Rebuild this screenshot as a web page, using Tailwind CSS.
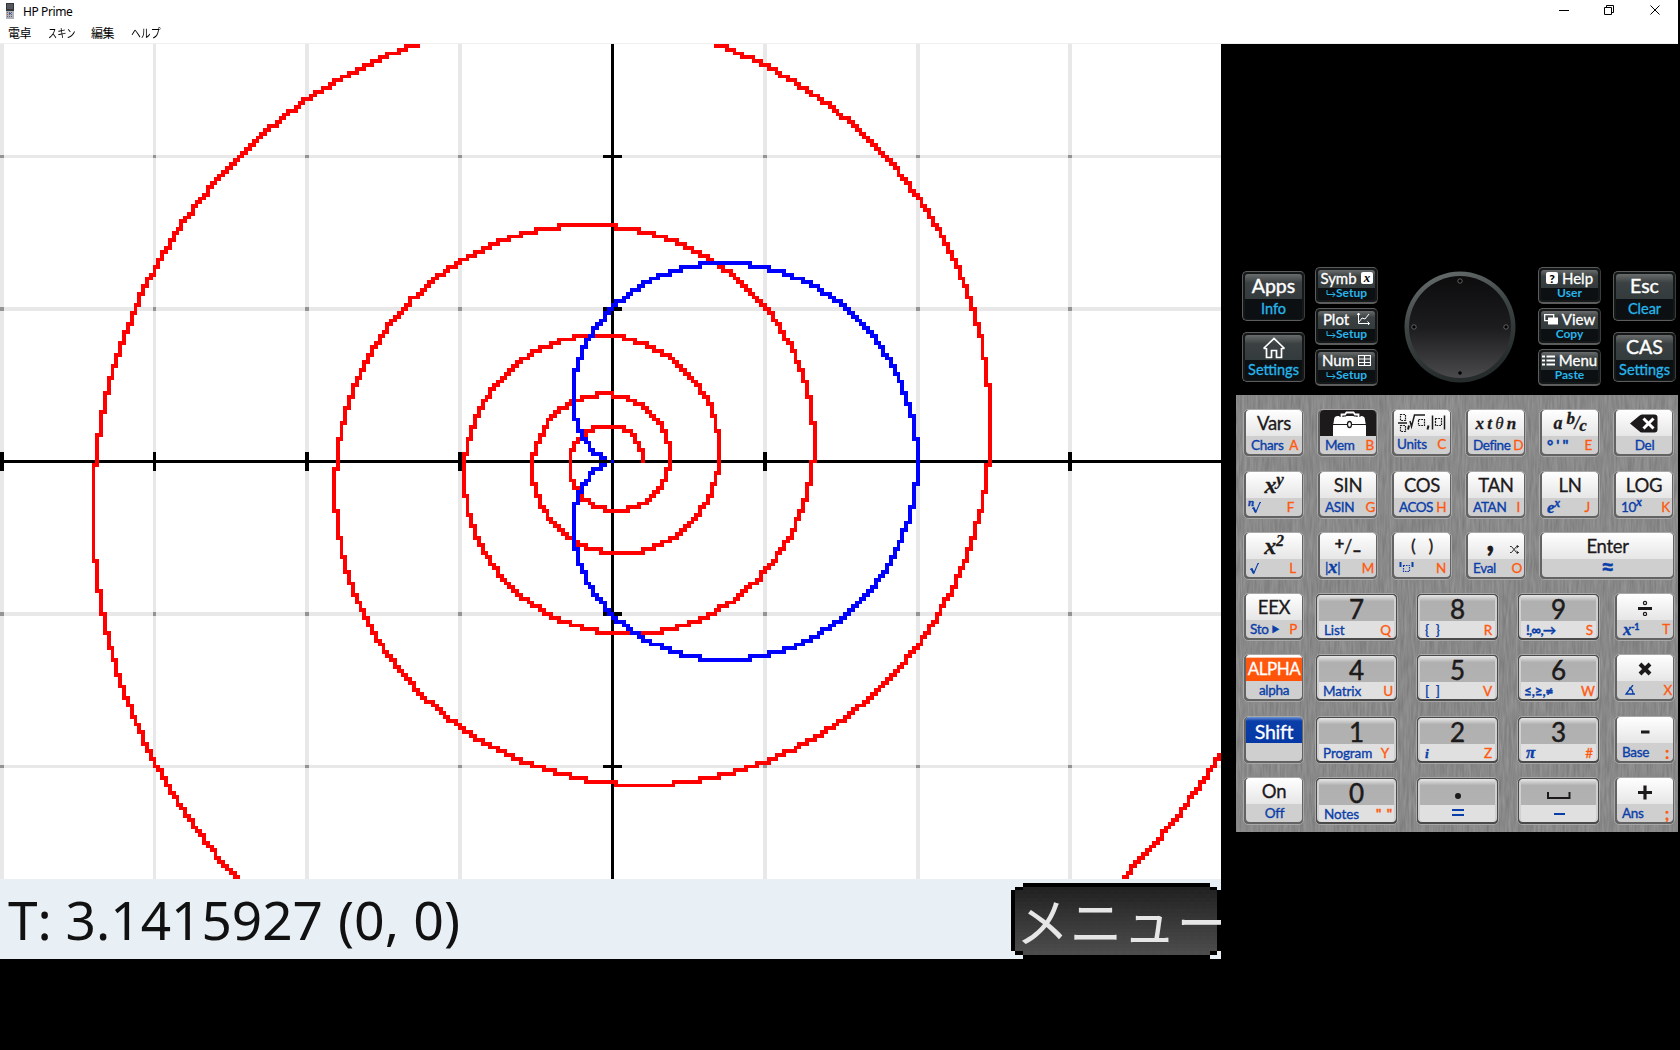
<!DOCTYPE html>
<html lang="ja">
<head>
    <meta charset="UTF-8">
    <meta name="viewport" content="width=device-width, initial-scale=1.0">
    <title>HP Prime</title>
    <script src="https://cdn.jsdelivr.net/npm/@tailwindcss/browser@4"></script>
</head>
<body class="bg-black w-[1680px] h-[1050px] overflow-hidden font-['Lato','Noto_Sans_CJK_JP',sans-serif]">

    <!-- Title bar + menu -->
    <header class="w-[1678px] h-[44px] bg-white border-b border-[#f0f0f0] font-['Noto_Sans','Noto_Sans_CJK_JP',sans-serif] text-black">
        <div class="flex items-center h-[22px]">
            <svg class="ml-[6px] -mt-[1px]" width="8" height="16" viewBox="0 0 8 16">
                <rect width="8" height="16" fill="#aeb2b8"/>
                <rect width="8" height="8" fill="#34363a"/>
                <rect x="1" y="1" width="6" height="5" fill="#55585c"/>
                <path d="M1 9.500h6M1 11.500h6M1 13.500h6" stroke="#63676d" stroke-dasharray="1 1"/>
                <path d="M1 11.500h1" stroke="#e0402a"/><path d="M3 10.500h2" stroke="#2b56c0"/>
            </svg>
            <span class="ml-[9px] mt-[1px] text-[12px] leading-[22px] tracking-[-0.4px]">HP Prime</span>
            <svg class="ml-auto mr-[17px] -mt-[2px]" width="102" height="12" viewBox="0 0 102 12" fill="none" stroke="#000">
                <path d="M0 6.5h10"/>
                <path d="M45.5 3.500h7v7h-7zM47.500 3.500v-2h7v7h-2"/>
                <path d="M91.500 1.500l9 9M100.500 1.500l-9 9"/>
            </svg>
        </div>
        <nav class="flex h-[21px] pt-[1px] pl-[8px] text-[12px] leading-[21px]">
            <span class="w-[40px] tracking-[-0.5px]">電卓</span>
            <span class="w-[43px]"><span class="inline-block origin-left scale-x-[0.77]">スキン</span></span>
            <span class="w-[40px] tracking-[-0.5px]">編集</span>
            <span><span class="inline-block origin-left scale-x-[0.82]">ヘルプ</span></span>
        </nav>
    </header>

    <main class="flex">
        <!-- Calculator screen -->
        <section class="relative w-[1221px] h-[915px] overflow-hidden bg-white">
            <canvas id="screen" width="320" height="240" class="block w-[1221px] h-[915px] [image-rendering:pixelated]"></canvas>
            <div class="absolute left-[8px] bottom-0 h-[80px] w-[460px]">
                <svg width="460" height="80" class="font-['Noto_Sans',sans-serif]">
                    <text x="0" y="61" font-size="53" textLength="315" lengthAdjust="spacingAndGlyphs" fill="#111">T: 3.1415927</text>
                    <text x="330" y="61" font-size="53" textLength="122" lengthAdjust="spacingAndGlyphs" fill="#111">(0, 0)</text>
                </svg>
            </div>
            <div class="absolute left-[1016px] bottom-0 h-[76px] w-[205px] overflow-hidden whitespace-nowrap text-[#e6e6e6] text-[53px] leading-[74px] tracking-[0.5px] font-['Noto_Sans_CJK_JP',sans-serif] font-normal">メニュー</div>
        </section>

        <!-- Keyboard -->
        <section class="ml-[15px] w-[442px]">
            <div class="flex h-[351px] pt-[227px] pl-[6px]">
                <div id="navA" class="flex flex-col gap-[11px]"></div>
                <div id="navB" class="flex flex-col gap-[4px] -mt-[4px] ml-[10px]"></div>
                <svg class="ml-[26px] shrink-0" width="112" height="112" viewBox="0 0 112 112">
                    <defs>
                        <linearGradient id="rim" x1="0" y1="0" x2="0.3" y2="1">
                            <stop offset="0" stop-color="#6d7272"/><stop offset="0.5" stop-color="#3d4444"/><stop offset="1" stop-color="#262b2b"/>
                        </linearGradient>
                        <linearGradient id="face" x1="0" y1="0" x2="0" y2="1">
                            <stop offset="0" stop-color="#0c0c0d"/><stop offset="0.5" stop-color="#1c1c1e"/><stop offset="1" stop-color="#4a4a4c"/>
                        </linearGradient>
                    </defs>
                    <circle cx="56" cy="56" r="55.500" fill="url(#rim)"/>
                    <circle cx="56" cy="56" r="51" fill="url(#face)"/>
                    <g fill="#000" stroke="#777" stroke-width="0.8">
                        <circle cx="56" cy="10" r="2.200"/><circle cx="10" cy="56" r="2.200"/><circle cx="102" cy="56" r="2.200"/><circle cx="56" cy="102" r="1.800" stroke="none"/>
                    </g>
                </svg>
                <div id="navC" class="flex flex-col gap-[4px] -mt-[4px] ml-[22px]"></div>
                <div id="navD" class="flex flex-col gap-[11px] ml-[12px]"></div>
            </div>

            <div class="relative w-[442px] h-[437px] bg-[#8a8a8a] overflow-hidden">
                <svg class="absolute inset-0" width="442" height="437">
                    <filter id="brushed" x="0" y="0" width="100%" height="100%" color-interpolation-filters="sRGB">
                        <feTurbulence type="fractalNoise" baseFrequency="0.45 0.05" numOctaves="2" seed="4"/>
                        <feColorMatrix values="0.15 0 0 0 0.46  0.15 0 0 0 0.46  0.15 0 0 0 0.46  0 0 0 0 1"/>
                    </filter>
                    <rect width="442" height="437" filter="url(#brushed)"/>
                </svg>
                <div id="keys" class="relative pt-[14px] pl-[7px] flex flex-col"></div>
            </div>
        </section>
    </main>

    <script>
        // ---- keyboard ----
        const math = (s) => `<i class="font-['Liberation_Serif',serif] font-bold">${s}</i>`;

        const navBig = (top, bottom) => `
            <div class="w-[63px] h-[50px] rounded-[5px] border border-[#5c5c5c] border-r-[#3c3c3c] bg-[#151818] p-[2px] text-center">
                <div class="h-[25px] rounded-t-[3px] bg-linear-to-b from-[#6a6c6c] from-0% via-[#3b4142] via-35% to-[#343b3c] text-white text-[19.500px] leading-[23px] flex justify-center [-webkit-text-stroke:0.400px_#fff]">${top}</div>
                <div class="h-[20px] rounded-b-[3px] bg-[#0c1012] text-[#27b5ec] text-[14.500px] leading-[20px] [-webkit-text-stroke:0.300px_#27b5ec]">${bottom}</div>
            </div>`;

        const navSmall = (top, bottom) => `
            <div class="w-[63px] h-[37px] rounded-[5px] border border-[#5c5c5c] border-b-2 border-r-[#3c3c3c] bg-[#151818] p-[2px] text-center">
                <div class="h-[18px] rounded-t-[3px] bg-linear-to-b from-[#6a6c6c] from-0% via-[#3b4142] via-35% to-[#343b3c] text-white text-[15px] leading-[15px] flex justify-center items-center gap-[4px] [-webkit-text-stroke:0.300px_#fff] pb-[2px]">${top}</div>
                <div class="h-[12px] rounded-b-[3px] bg-[#0c1012] text-[#27b5ec] text-[12px] leading-[10px] font-bold">${bottom}</div>
            </div>`;

        const arrow = `<svg class="inline-block" width="10" height="8" viewBox="0 0 10 8" fill="none" stroke="#27b5ec"><path d="M1 0v4.500h8M6.500 2l2.500 2.500l-2.500 2.500"/></svg>`;
        const house = `<svg class="mt-[2px]" width="24" height="22" viewBox="0 0 24 22" fill="none" stroke="#fff" stroke-width="1.700"><path d="M4.500 11v9.500h5v-7h5v7h5v-9.500M1.500 11.500h3M19.500 11.500h3M1.500 11.500L12 1.500l10.500 10"/></svg>`;
        const boxX = `<svg width="12" height="12" viewBox="0 0 12 12"><rect width="12" height="12" rx="2" fill="#fff"/><text x="6" y="10" text-anchor="middle" font-size="13" font-weight="bold" font-style="italic" font-family="Liberation Serif" style="-webkit-text-stroke:0">x</text></svg>`;
        const chart = `<svg class="ml-[4px]" width="13" height="12" viewBox="0 0 13 12" fill="none" stroke="#fff"><path d="M1.500 0v10.500h11M10.500 8.500l2 2l-2 2M0 2l1.500-2l1.500 2M2 9l3-4l3 1l4-5"/></svg>`;
        const table = `<svg width="13" height="11" viewBox="0 0 13 11" fill="none" stroke="#fff"><path d="M.5.5h12v10h-12zM.5 4h12M.5 7.500h12M6.500.5v10" stroke-width="1.200"/></svg>`;
        const question = `<svg width="12" height="12" viewBox="0 0 12 12"><rect width="12" height="12" rx="2" fill="#fff"/><text x="6" y="10.500" text-anchor="middle" font-size="12" font-weight="900" font-family="Lato" style="-webkit-text-stroke:0">?</text></svg>`;
        const windows = `<svg width="14" height="11" viewBox="0 0 14 11"><path d="M.7.7h9v6h-9z" fill="none" stroke="#fff" stroke-width="1.300"/><rect x="4" y="3.500" width="10" height="7" fill="#fff"/></svg>`;
        const list = `<svg width="13" height="11" viewBox="0 0 13 11" stroke="#fff" stroke-width="2.200"><path d="M0 1.500h3M0 5.500h3M0 9.500h3M4.500 1.500h8.500M4.500 5.500h8.500M4.500 9.500h8.500"/></svg>`;

        document.getElementById('navA').innerHTML = navBig('Apps', 'Info') + navBig(house, 'Settings');
        document.getElementById('navB').innerHTML = navSmall('Symb' + boxX, arrow + 'Setup') + navSmall('Plot' + chart, arrow + 'Setup') + navSmall('Num' + table, arrow + 'Setup');
        document.getElementById('navC').innerHTML = navSmall(question + 'Help', 'User') + navSmall(windows + 'View', 'Copy') + navSmall(list + 'Menu', 'Paste');
        document.getElementById('navD').innerHTML = navBig('Esc', 'Clear') + navBig('CAS', 'Settings');

        const sub = (left, right, pad) => `
            <div class="flex ${right ? 'justify-between' : 'justify-center'} ${pad} text-[#0a3ea8] whitespace-nowrap [-webkit-text-stroke:0.350px]">
                <span>${left}</span>${right ? `<span class="text-[#ff5a10]">${right}</span>` : ''}
            </div>`;

        // white function key
        const key = (top, left, right, pad = 'pl-[5px] pr-[4px]', size = 'w-[61px]', face = 'bg-linear-to-b from-white to-[#e6e6e6] text-[#1d1a1b]') => `
            <div class="${size} h-[48px] rounded-[5px] border border-[#a8a8a8] bg-[#636363] pl-[2px] pr-[1px] pb-[2px]">
                <div class="h-[44px] rounded-[4px] bg-[#cfcfcf] overflow-hidden text-[13.500px] leading-[19px] tracking-[-0.3px]">
                    <div class="h-[26px] ${face} text-[18.500px] leading-[27px] flex justify-center whitespace-nowrap [-webkit-text-stroke:0.300px]">${top}</div>
                    ${sub(left, right, pad)}
                </div>
            </div>`;

        // gray number key
        const num = (top, left, right, pad = 'pl-[5px] pr-[3px]') => `
            <div class="w-[83px] h-[48px] rounded-[5px] border border-[#a8a8a8] bg-[#4a4a4a] p-[1px] pb-[2px]">
                <div class="h-[43px] rounded-[4px] border-x-2 border-[#d0d0d0] bg-[#e0e0e0] overflow-hidden text-[13.500px] leading-[18px] tracking-[-0.1px]">
                    <div class="h-[26px] bg-linear-to-b from-[#e8e8e8] from-0% via-[#b0b0b0] via-25% to-[#b2b2b2] text-[#1d1a1b] text-[26px] leading-[28px] flex justify-center [-webkit-text-stroke:0.500px]">${top}</div>
                    ${sub(left, right, pad)}
                </div>
            </div>`;

        const toolbox = `<svg class="shrink-0" width="57" height="26" viewBox="0 0 57 26"><path d="M13 26v-10l1-6q0-4 4-4h23q4 0 4 4l1 6v10z" fill="#fff"/><path d="M21.500 7v-2.500h3.500l1.500-2h7l1.500 2h3.500v2.500" fill="none" stroke="#1d1a1b" stroke-width="4"/><path d="M21.500 7v-2.500h3.500l1.500-2h7l1.500 2h3.500v2.500" fill="none" stroke="#fff" stroke-width="1.800"/><path d="M13 14.500h14M32 14.500h14" stroke="#1d1a1b"/><ellipse cx="29.500" cy="14.500" rx="2" ry="3" fill="#fff" stroke="#1d1a1b" stroke-width="1.300"/></svg>`;
        const templates = `<svg width="50" height="26" viewBox="0 0 50 26" fill="none" stroke="#1d1a1b" stroke-width="1.200"><g stroke-dasharray="1.800 0.900"><path d="M3.500 4.500h5v6h-5zM3.500 15.500h5v6h-5zM21.500 9.500h6v6h-6zM38.500 8.500h6v7h-6z"/></g><path d="M1 13h9M13 11l1.500 5.500l3-11.500h10.500M35.500 5.500v14M47.500 5.500v14" stroke-width="1.500"/><path d="M12 15.500l-1 4M31.500 15.500l-1 4" stroke-width="2"/></svg>`;
        const delIcon = `<svg class="mt-[4px]" width="28" height="19" viewBox="0 0 28 19"><path d="M0 9.500L9 2q1.500-1.500 3-1.500h12.500q3 0 3 3v12q0 3-3 3H12q-1.500 0-3-1.500z" fill="#1d1a1b"/><path d="M13.500 4.500l10 10M23.500 4.500l-10 10" stroke="#fff" stroke-width="3"/></svg>`;
        const root = `<svg class="mt-[4px]" width="9" height="12" viewBox="0 0 9 12" fill="none" stroke="#0a3ea8"><path d="M0 6.500l1.800-1" /><path d="M1.500 5.500l2 4.500" stroke-width="2"/><path d="M3.500 11L8 0.500h1" stroke-width="1.100"/></svg>`;
        const quoteBox = `<svg class="mt-[3px]" width="15" height="11" viewBox="0 0 15 11" fill="none" stroke="#0a3ea8"><path d="M1.500 0v5M13.500 0v5" stroke-width="2"/><path d="M4.500 3.500h6v6h-6z" stroke-width="1.200" stroke-dasharray="1.600 0.900"/></svg>`;
        const shuffle = `<svg class="absolute left-[24px] top-[12px]" width="9" height="9" viewBox="0 0 9 9" fill="none" stroke="#1d1a1b" stroke-width="0.900"><path d="M0 1.500h1.500l5 6H8.500M0 7.500h1.500l5-6H8.500M6.500 0L8.500 1.500L6.500 3M6.500 6L8.500 7.500L6.500 9"/></svg>`;
        const space = `<svg class="mt-[13px]" width="24" height="8" viewBox="0 0 24 8" fill="none" stroke="#1d1a1b" stroke-width="2"><path d="M1 0v6h21.500v-6"/></svg>`;
        const angle = `<svg class="mt-[4px]" width="11" height="10" viewBox="0 0 11 10" fill="none" stroke="#0a3ea8" stroke-width="1.300"><path d="M8 0L1 9h9M4 3q4 1 4 6"/></svg>`;
        const bars = (d) => `<svg class="mt-[4px]" width="12" height="9" viewBox="0 0 12 9" stroke="#0a3ea8" stroke-width="2"><path d="${d}"/></svg>`;
        const op = (d) => `<svg class="mt-[6px]" width="16" height="16" viewBox="0 0 16 16" fill="none" stroke="#1d1a1b" stroke-width="3.200">${d}</svg>`;
        const orange = 'bg-linear-to-b from-white from-8% via-[#ff5a10] via-12% to-[#ff5208] text-white';
        const blue = 'bg-linear-to-b from-[#6f94d8] via-[#0a3ea8] via-15% to-[#0538a5] text-white';
        const dark = 'bg-[#1d1a1b] text-white';

        const rows = [
            [
                key('Vars', 'Chars', 'A'),
                key(toolbox, 'Mem', 'B', 'pl-[5px] pr-[2px]', 'w-[61px]', dark),
                key(templates, 'Units', 'C', 'pl-[3px] pr-[4px] -mt-[1px]'),
                key(`<span class="font-['Liberation_Serif'] text-[17px] leading-[28px] italic font-bold tracking-[3.200px] mr-[-3px]">xt<span class="font-normal">θ</span>n</span>`, 'Define', 'D', 'pl-[5px] pr-[1px] tracking-[-0.400px]'),
                key(`<span class="font-['Liberation_Serif'] text-[18px] italic font-bold">a <sup class="text-[17px] -top-[5px]">b</sup>/<sub class="text-[17px] bottom-[-2px]">c</sub></span>`, `<b class="tracking-[3px] text-[15px]">°'"</b>`, 'E', 'pl-[5px] pr-[6px]'),
                key(delIcon, 'Del', ''),
            ],
            [
                key(`<span class="font-['Liberation_Serif'] text-[24px] italic font-bold">x<sup class="text-[17px] -top-[8px]">y</sup></span>`, `<span class="flex"><i class="text-[11px] leading-[9px] font-bold font-['Liberation_Serif']">n</i><span class="-ml-[2px]">${root}</span></span>`, 'F', 'pl-[2px] pr-[8px]'),
                key('SIN', 'ASIN', 'G', 'pl-[5px] pr-[1px]'),
                key('COS', 'ACOS', 'H', 'pl-[5px] pr-[4px] tracking-[-0.500px]'),
                key('TAN', 'ATAN', 'I', 'pl-[5px] pr-[4px]'),
                key('LN', `${math('<span class="text-[17px]">e</span>')}<sup class="text-[12px]">${math('x')}</sup>`, 'J', 'pl-[5px] pr-[8px]'),
                key('LOG', `10<sup class="text-[12px]">${math('x')}</sup>`, 'K', 'pl-[5px] pr-[2px]'),
            ],
            [
                key(`<span class="font-['Liberation_Serif'] text-[24px] italic font-bold">x<sup class="text-[16px] -top-[8px]">2</sup></span>`, root, 'L', 'pl-[4px] pr-[6px]'),
                key('<span class="font-bold"><sup class="text-[17px] -top-[4px]">+</sup><span class="font-normal">/</span><sub class="text-[17px] bottom-[-3px]">–</sub></span>', `|${math('<span class="text-[19px] leading-[16px]">x</span>')}|`, 'M', 'pl-[5px] pr-[2px]'),
                key('<span class="text-[18px] leading-[25px]">(&nbsp;&nbsp; )</span>', quoteBox, 'N', 'pl-[5px] pr-[4px]'),
                key(`<span class="relative -ml-[12px] font-black text-[34px] leading-[9px]">,${shuffle}</span>`, 'Eval', 'O', 'pl-[5px] pr-[2px]'),
                key('<span class="leading-[26px]">Enter</span>', '<b class="text-[24px] leading-[16px]">≈</b>', '', '', 'w-[136px]'),
            ],
            [
                key('EEX', 'Sto<span class="text-[8px] align-[2px] font-[\'DejaVu_Sans\'] ml-[3px]">▶</span>', 'P', 'pl-[4px] pr-[5px]'),
                num('7', 'List', 'Q'), num('8', '{ &nbsp;}', 'R'), num('9', '<b class="tracking-[-0.800px]">!,∞,→</b>', 'S'),
                key(op('<path d="M1 8.500h14"/><circle cx="8" cy="3" r="0.600"/><circle cx="8" cy="14" r="0.600"/>'), `${math('<span class="text-[17px]">x</span>')}<sup class="text-[9px] font-bold">-1</sup>`, 'T', 'pl-[6px] pr-[3px]'),
            ],
            [
                key('<span class="text-[17px] leading-[28px] tracking-[-0.500px]">ALPHA</span>', '<span class="leading-[16px]">alpha</span>', '', '', 'w-[61px]', orange),
                num('4', 'Matrix', 'U', 'pl-[4px] pr-[1px]'), num('5', '[ &nbsp;]', 'V'), num('6', '<b>≤,≥,≠</b>', 'W', 'pl-[3px] pr-[1px]'),
                key(op('<path d="M3 3l10 10M13 3l-10 10" stroke-width="4"/>'), angle, 'X', 'pl-[8px] pr-[1px]'),
            ],
            [
                key('<span class="text-[19.500px] leading-[29px]">Shift</span>', '', '', '', 'w-[61px]', blue),
                num('1', 'Program', 'Y', 'pl-[4px] pr-[5px]'), num('2', math('i'), 'Z'), num('3', math('<span class="text-[17px]">π</span>'), '#'),
                key(op('<path d="M4 9h8.500"/>'), 'Base', '<b class="text-[17px]">:</b>', 'pl-[5px] pr-[4px]'),
            ],
            [
                key('<span class="leading-[26px]">On</span>', '<span class="leading-[14px]">Off</span>', ''),
                num('0', 'Notes', '<b class="tracking-[1px]">" "</b>', 'pl-[5px] pr-[1px]'),
                num(op('<circle cx="8" cy="11" r="1.400"/>'), bars('M0 1h12M0 6h12'), '', ''),
                num(space, bars('M1 5h11'), '', ''),
                key(op('<path d="M1 8.500h14M8 1.500v14"/>'), 'Ans', '<b class="text-[17px]">;</b>', 'pl-[5px] pr-[4px]'),
            ],
        ];

        document.getElementById('keys').innerHTML = rows.map((r, i) =>
            i < 3
                ? `<div class="flex gap-[13px] ${i < 2 ? 'h-[61.500px]' : 'h-[60.500px]'}">${r.join('')}</div>`
                : `<div class="flex h-[61.500px]">${r[0]}<div class="flex gap-[18px] ml-[11px] mr-[14px]">${r.slice(1, 4).join('')}</div>${r[4]}</div>`
        ).join('');

        // ---- polar plot, 320x240 ----
        const ctx = document.getElementById('screen').getContext('2d');
        const OX = 160, OY = 109, UNIT = 40;
        const box = (c, x, y, w, h) => { ctx.fillStyle = c; ctx.fillRect(x, y, w, h); };

        box('#ffffff', 0, 0, 320, 240);
        for (let x = 0; x < 320; x += UNIT) box('#e8e8e8', x, 0, 1, 219);
        for (let y = 29; y < 219; y += UNIT) box('#e8e8e8', 0, y, 320, 1);
        for (let x = 0; x < 320; x += UNIT) for (let y = 29; y < 219; y += UNIT) box('#949494', x, y, 1, 1);
        box('#000', OX, 0, 1, 219);
        box('#000', 0, OY, 320, 1);
        for (let x = 0; x < 320; x += UNIT) box('#000', x, OY - 2, 1, 5);
        for (let y = 29; y < 219; y += UNIT) box('#000', OX - 2, y, 5, 1);

        function polar(color, r, max, step) {
            let lx = null, ly = null;
            for (let t = 0; t <= max; t += step) {
                const x = Math.floor(OX + r(t) * UNIT * Math.cos(t) + 0.3);
                const y = Math.floor(OY - r(t) * UNIT * Math.sin(t) + 0.5);
                if (lx !== null && x !== lx && y !== ly) box(color, x, ly, 1, 1);
                box(color, x, y, 1, 1);
                lx = x; ly = y;
            }
        }

        polar('#ff0000', t => 0.2 * Math.exp(0.1 * t), 11 * Math.PI, 0.001);
        polar('#0000ff', t => 1 + Math.cos(t), 2 * Math.PI, 0.001);
        box('#000', OX - 4, OY, 4, 1);

        // status bar and menu button
        box('#e8f0f6', 0, 219, 320, 21);
        const g = ctx.createLinearGradient(0, 221, 0, 239);
        g.addColorStop(0, '#202020');
        g.addColorStop(1, '#4e4e4e');
        box('#000', 268, 220, 49, 20);
        box('#000', 266, 221, 53, 18);
        box('#000', 265, 222, 55, 16);
        box(g, 268, 221, 49, 18);
        box(g, 266, 222, 53, 16);
    </script>
</body>
</html>
